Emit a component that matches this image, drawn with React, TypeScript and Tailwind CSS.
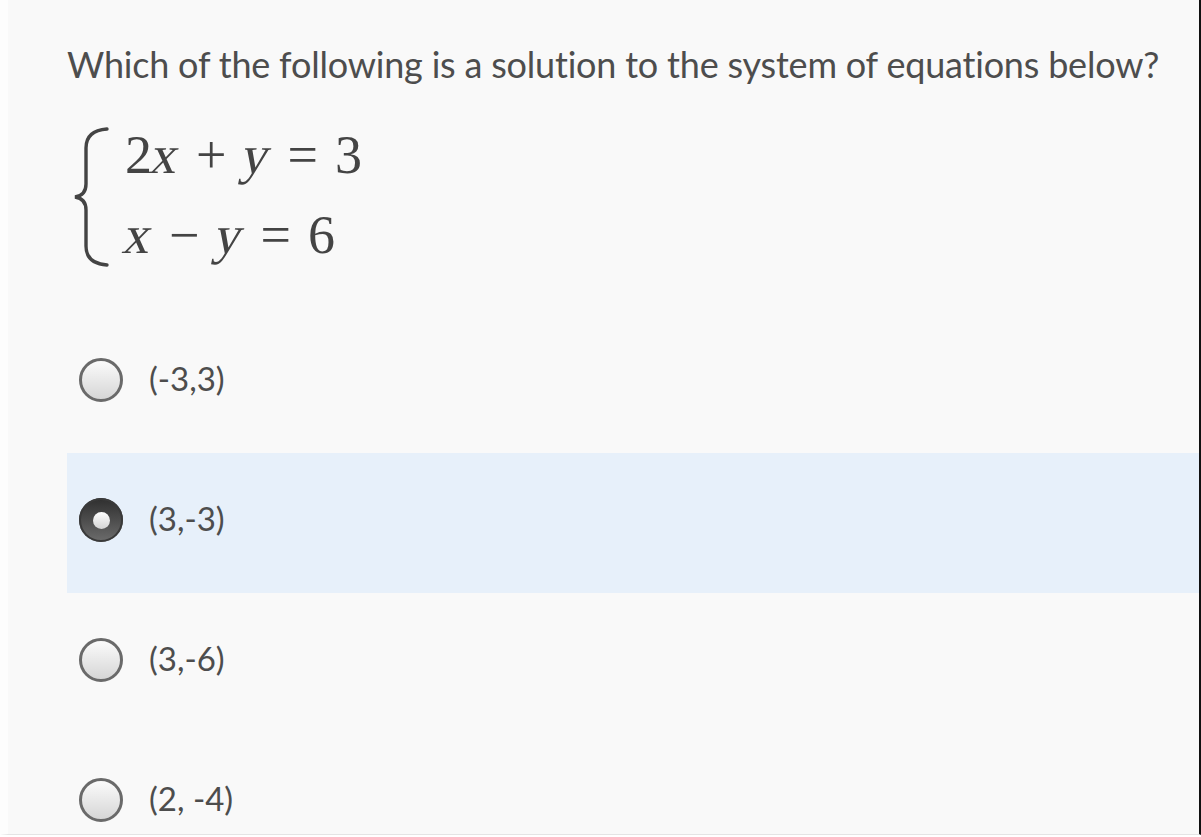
const options = [
  { label: '(-3,3)', checked: false },
  { label: '(3,-3)', checked: true },
  { label: '(3,-6)', checked: false },
  { label: '(2, -4)', checked: false },
]

function Radio({ checked }: { checked: boolean }) {
  if (checked) {
    return (
      <div className="flex h-11 w-11 items-center justify-center rounded-full bg-linear-to-b from-[#2f2f2f] to-[#6d6d6d] shadow-[inset_0_0_0_2px_#3a3a3a]">
        <div className="h-[17px] w-[17px] rounded-full bg-linear-to-b from-white to-[#d4d4d4]" />
      </div>
    )
  }
  return (
    <div className="h-11 w-11 rounded-full border-[3px] border-[#6a6a6a] bg-linear-to-b from-[#fbfbfb] to-[#d6d6d6]" />
  )
}

function Brace() {
  return (
    <svg width="36" height="140" viewBox="0 0 36 140" className="text-[#444]">
      <path
        d="M34 2 C20 3 13 9 13 21 L13 57 C13 65 9 69 2 70 C9 71 13 75 13 83 L13 119 C13 131 20 137 34 138"
        fill="none"
        stroke="currentColor"
        strokeWidth="3.4"
        strokeLinecap="round"
      />
    </svg>
  )
}

function Op({ children }: { children: string }) {
  return <span className="mx-[17px]">{children}</span>
}

function V({ children }: { children: string }) {
  return <span className="inline-block -skew-x-12">{children}</span>
}

export default function App() {
  return (
    <div className="h-[837px] w-[1201px] overflow-hidden bg-white">
      <div className="h-[835px] border-r-2 border-b border-l-8 border-r-[#111] border-b-[#e4e4e4] border-l-[#fdfdfd] bg-[#f9f9f9] pl-[59px] font-['Lato',sans-serif] text-[#4d4d4d]">
        <h1 className="pt-[40px] text-[36px] leading-[48px] tracking-[-0.2px]">
          Which of the following is a solution to the system of equations below?
        </h1>

        <div className="mt-[27px] flex items-start pl-[6px] font-['Liberation_Serif',serif] text-[54px] text-[#444]">
          <div className="mt-[12px]">
            <Brace />
          </div>
          <div className="ml-[16px] flex flex-col leading-[80px] whitespace-nowrap">
            <div>
              2<V>x</V>
              <Op>+</Op>
              <V>y</V>
              <Op>=</Op>3
            </div>
            <div>
              <V>x</V>
              <Op>−</Op>
              <V>y</V>
              <Op>=</Op>6
            </div>
          </div>
        </div>

        <div className="mt-[38px] flex flex-col">
          {options.map((o) => (
            <div
              key={o.label}
              className={`flex h-[140px] items-center gap-[26px] pl-[12px] ${o.checked ? 'bg-[#e7f0fa]' : ''}`}
            >
              <div className="-mt-[6px]">
                <Radio checked={o.checked} />
              </div>
              <span className="pb-[8px] text-[33px]">{o.label}</span>
            </div>
          ))}
        </div>
      </div>
    </div>
  )
}
